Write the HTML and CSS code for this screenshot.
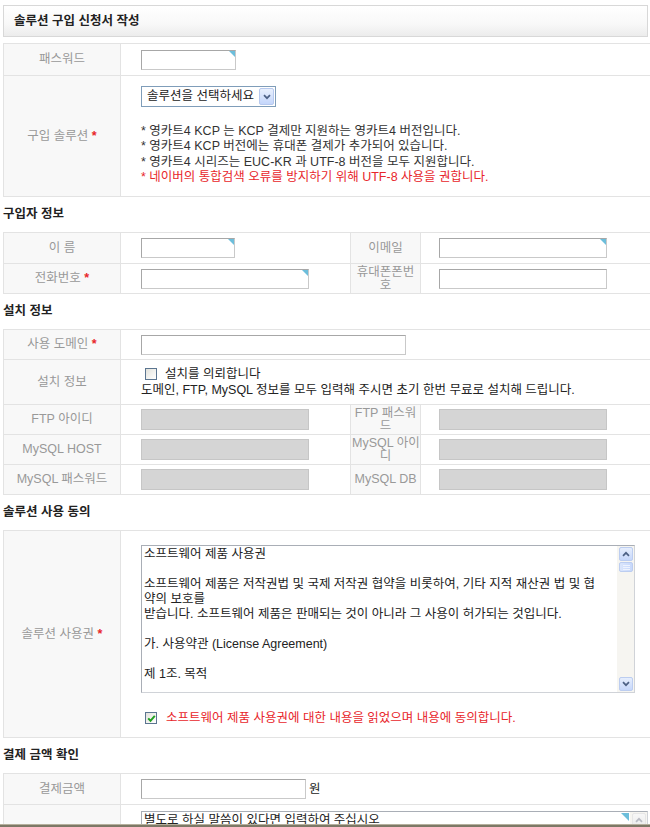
FILE: index.html
```html
<!DOCTYPE html>
<html lang="ko">
<head>
<meta charset="utf-8">
<title>솔루션 구입 신청서 작성</title>
<link rel="stylesheet" href="styles.css">
</head>
<body>
<div class="page">
  <div class="title-box">솔루션 구입 신청서 작성</div>

  <table class="form">
    <colgroup><col class="c-lab"><col></colgroup>
    <tr class="h32">
      <th>패스워드</th>
      <td><span class="mk"><input type="password" class="txt w95"></span></td>
    </tr>
    <tr class="h121">
      <th>구입 솔루션 <em class="req">*</em></th>
      <td class="sol">
        <div class="select">
          <span class="sel-text">솔루션을 선택하세요</span>
          <span class="sel-btn"><svg width="8" height="6" viewBox="0 0 8 6"><path d="M1 1.2 L4 4.2 L7 1.2" fill="none" stroke="#4d6185" stroke-width="1.7"/></svg></span>
        </div>
        <div class="notes">
          <p>* 영카트4 KCP 는 KCP 결제만 지원하는 영카트4 버전입니다.</p>
          <p>* 영카트4 KCP 버전에는 휴대폰 결제가 추가되어 있습니다.</p>
          <p>* 영카트4 시리즈는 EUC-KR 과 UTF-8 버전을 모두 지원합니다.</p>
          <p class="red">* 네이버의 통합검색 오류를 방지하기 위해 UTF-8 사용을 권합니다.</p>
        </div>
      </td>
    </tr>
  </table>

  <h3 class="sec">구입자 정보</h3>
  <table class="form">
    <colgroup><col class="c-lab"><col class="c-val"><col class="c-lab2"><col></colgroup>
    <tr class="h31">
      <th>이 름</th>
      <td><span class="mk"><input type="text" class="txt w94"></span></td>
      <th>이메일</th>
      <td class="v2"><span class="mk"><input type="text" class="txt w168"></span></td>
    </tr>
    <tr class="h30">
      <th>전화번호 <em class="req">*</em></th>
      <td><span class="mk"><input type="text" class="txt w168"></span></td>
      <th>휴대폰폰번<br>호</th>
      <td class="v2"><input type="text" class="txt w168"></td>
    </tr>
  </table>

  <h3 class="sec">설치 정보</h3>
  <table class="form">
    <colgroup><col class="c-lab"><col class="c-val"><col class="c-lab2"><col></colgroup>
    <tr class="h30">
      <th>사용 도메인 <em class="req">*</em></th>
      <td colspan="3"><input type="text" class="txt w265"></td>
    </tr>
    <tr class="h45">
      <th>설치 정보</th>
      <td colspan="3" class="inst">
        <div class="inst-line"><span class="cb"></span><span>설치를 의뢰합니다</span></div>
        <div class="inst-line2">도메인, FTP, MySQL 정보를 모두 입력해 주시면 초기 한번 무료로 설치해 드립니다.</div>
      </td>
    </tr>
    <tr class="h30">
      <th>FTP 아이디</th>
      <td><input type="text" class="txt dis w168" disabled></td>
      <th>FTP 패스워<br>드</th>
      <td class="v2"><input type="text" class="txt dis w168" disabled></td>
    </tr>
    <tr class="h30">
      <th>MySQL HOST</th>
      <td><input type="text" class="txt dis w168" disabled></td>
      <th>MySQL 아이<br>디</th>
      <td class="v2"><input type="text" class="txt dis w168" disabled></td>
    </tr>
    <tr class="h30">
      <th>MySQL 패스워드</th>
      <td><input type="text" class="txt dis w168" disabled></td>
      <th>MySQL DB</th>
      <td class="v2"><input type="text" class="txt dis w168" disabled></td>
    </tr>
  </table>

  <h3 class="sec">솔루션 사용 동의</h3>
  <table class="form">
    <colgroup><col class="c-lab"><col></colgroup>
    <tr class="h207">
      <th>솔루션 사용권 <em class="req">*</em></th>
      <td class="agree-cell">
        <div class="tbox">
          <div class="tbox-text">소프트웨어 제품 사용권

소프트웨어 제품은 저작권법 및 국제 저작권 협약을 비롯하여, 기타 지적 재산권 법 및 협
약의 보호를
받습니다. 소프트웨어 제품은 판매되는 것이 아니라 그 사용이 허가되는 것입니다.

가. 사용약관 (License Agreement)

제 1조. 목적</div>
          <div class="sbar">
            <span class="sb-btn"><svg width="8" height="6" viewBox="0 0 8 6"><path d="M1 4.8 L4 1.8 L7 4.8" fill="none" stroke="#4d6185" stroke-width="1.7"/></svg></span>
            <span class="sb-thumb"><i></i><i></i><i></i></span>
            <span class="sb-track"></span>
            <span class="sb-btn"><svg width="8" height="6" viewBox="0 0 8 6"><path d="M1 1.2 L4 4.2 L7 1.2" fill="none" stroke="#4d6185" stroke-width="1.7"/></svg></span>
          </div>
        </div>
        <div class="agree">
          <span class="cb checked"><svg width="9" height="9" viewBox="0 0 9 9"><path d="M1.2 4.4 L3.5 6.8 L7.8 1.8" fill="none" stroke="#21a121" stroke-width="2"/></svg></span>
          <span>소프트웨어 제품 사용권에 대한 내용을 읽었으며 내용에 동의합니다.</span>
        </div>
      </td>
    </tr>
  </table>

  <h3 class="sec">결제 금액 확인</h3>
  <table class="form">
    <colgroup><col class="c-lab"><col></colgroup>
    <tr class="h31">
      <th>결제금액</th>
      <td><div class="amount"><input type="text" class="txt w165"><span>원</span></div></td>
    </tr>
    <tr>
      <th>요청사항</th>
      <td class="memo-cell">
        <div class="tbox memo">
          <div class="tbox-text">별도로 하실 말씀이 있다면 입력하여 주십시오</div>
          <div class="sbar off">
            <span class="sb-btn"><svg width="8" height="6" viewBox="0 0 8 6"><path d="M1 4.8 L4 1.8 L7 4.8" fill="none" stroke="#b9bcc4" stroke-width="1.7"/></svg></span>
            <span class="sb-track"></span>
          </div>
          <span class="corner"></span>
        </div>
      </td>
    </tr>
  </table>
</div>
<div class="frame-edge"></div>
</body>
</html>
```

FILE: styles.css
```css
* { box-sizing: border-box; }
html, body { margin: 0; padding: 0; background: #fff; }
body {
  font-family: "Liberation Sans", "Noto Sans CJK KR", sans-serif;
  font-size: 12.5px;
  color: #333;
}
.page { width: 650px; padding: 5px 0 0 3px; }

.title-box {
  width: 645px;
  height: 32px;
  border: 1px solid #d8d8d8;
  background: linear-gradient(#ffffff 0%, #f8f8f8 60%, #ececec 100%);
  font-weight: 700;
  color: #222;
  line-height: 30px;
  padding-left: 10px;
  margin-bottom: 6px;
}

.sec {
  margin: 0;
  height: 35px;
  line-height: 35px;
  font-size: 12.5px;
  font-weight: 700;
  color: #222;
}

.form {
  width: 647px;
  table-layout: fixed;
  border-collapse: collapse;
  border-top: 1px solid #e3e3e3;
  border-left: 1px solid #e3e3e3;
}
.c-lab { width: 117px; }
.c-val { width: 230px; }
.c-lab2 { width: 70px; }

.form th {
  font-weight: normal;
  color: #999;
  background: #f8f8f8;
  text-align: center;
  vertical-align: middle;
  line-height: 13px;
  padding: 0 1px;
  white-space: nowrap;
  border-right: 1px solid #e3e3e3;
  border-bottom: 1px solid #e3e3e3;
}
.form td {
  vertical-align: middle;
  padding: 0 0 0 20px;
  border-bottom: 1px solid #e3e3e3;
  line-height: 15px;
}
.form td.v2 { padding-left: 18px; }
.form td + th { border-left: 1px solid #e3e3e3; }

.h30 { height: 30px; }
.h31 { height: 31px; }
.h32 { height: 32px; }
.h45 { height: 45px; }
.h121 { height: 121px; }
.h207 { height: 207px; }

.req { font-style: normal; color: #e8262b; font-weight: 700; }
.red { color: #e8262b; }

.txt {
  display: block;
  height: 20px;
  margin: 0;
  padding: 0 2px;
  font: inherit;
  background: #fff;
  border: 1px solid #c9c9c9;
  border-top-color: #a7a7a7;
  border-left-color: #a7a7a7;
  outline: none;
}
.txt.dis { background: #d5d5d5; border-color: #c6c6c6; height: 21px; }
.w94 { width: 94px; }
.w95 { width: 95px; }
.w165 { width: 165px; }
.w168 { width: 168px; }
.w265 { width: 265px; }

.mk { position: relative; display: inline-block; vertical-align: middle; }
.mk::after {
  content: "";
  position: absolute;
  top: 1px;
  right: 1px;
  border-style: solid;
  border-width: 0 6px 6px 0;
  border-color: transparent #6cbedb transparent transparent;
}

/* select */
.sol { vertical-align: top !important; padding-top: 10px !important; }
.select {
  display: flex;
  align-items: center;
  width: 135px;
  height: 21px;
  border: 1px solid #7f9db9;
  background: #fff;
  padding: 1px;
}
.sel-text { flex: 1; padding-left: 4px; line-height: 17px; color: #222; white-space: nowrap; }
.sel-btn {
  width: 15px;
  height: 17px;
  display: flex;
  align-items: center;
  justify-content: center;
  border: 1px solid #b7c9ee;
  border-radius: 2px;
  background: linear-gradient(#e9f0fd, #c4d6fb);
}
.notes { margin-top: 17px; line-height: 15.3px; }
.notes p { margin: 0; white-space: nowrap; }

/* install */
.inst-line { display: flex; align-items: center; gap: 8px; padding-left: 4px; line-height: 16px; color: #222; }
.inst-line2 { line-height: 17px; color: #222; white-space: nowrap; }
.cb {
  display: inline-flex;
  align-items: center;
  justify-content: center;
  width: 12px;
  height: 12px;
  border: 1px solid #5b7590;
  background: linear-gradient(135deg, #e2e2dc, #ffffff);
}

/* agreement */
.agree-cell { vertical-align: top !important; padding-top: 14px !important; }
.tbox {
  position: relative;
  display: flex;
  width: 494px;
  height: 148px;
  border: 1px solid #a9aeb6;
  border-right-color: #d0d3d8;
  border-bottom-color: #d0d3d8;
  background: #fff;
}
.tbox-text {
  flex: 1;
  padding: 1px 2px;
  line-height: 15px;
  white-space: pre;
  overflow: hidden;
  color: #222;
}
.sbar {
  width: 17px;
  flex: none;
  display: flex;
  flex-direction: column;
  padding: 1px 1px 1px 2px;
  background: #f6f5f1;
}
.sb-btn {
  height: 14px;
  display: flex;
  align-items: center;
  justify-content: center;
  border: 1px solid #bccdf0;
  border-radius: 2px;
  background: linear-gradient(#e6eefd, #c6d7fb);
}
.sb-thumb {
  height: 10px;
  margin-top: 1px;
  display: flex;
  flex-direction: column;
  align-items: center;
  justify-content: center;
  gap: 1px;
  border: 1px solid #bccdf0;
  border-radius: 2px;
  background: linear-gradient(90deg, #dbe6fc, #c7d8fb);
}
.sb-thumb i { display: block; width: 7px; height: 1px; background: #eef3fe; }
.sb-track { flex: 1; }
.agree {
  margin-top: 17px;
  display: flex;
  align-items: center;
  gap: 9px;
  padding-left: 4px;
  line-height: 16px;
  color: #e8262b;
  white-space: nowrap;
}

/* payment */
.amount { display: flex; align-items: center; gap: 3px; color: #222; }
.memo-cell { vertical-align: top !important; padding-top: 6px !important; padding-bottom: 10px !important; }
.tbox.memo { width: 507px; height: 100px; }
.sbar.off .sb-btn { border-color: #e6e6e6; background: linear-gradient(#f7f7f7, #ececec); }
.corner {
  position: absolute;
  top: 1px;
  right: 18px;
  border-style: solid;
  border-width: 0 8px 8px 0;
  border-color: transparent #6cbedb transparent transparent;
}

.frame-edge {
  position: fixed;
  left: 0;
  right: 0;
  bottom: 0;
  height: 3px;
  background: #7d7866;
  border-top: 1px solid #b5b09d;
}
```
